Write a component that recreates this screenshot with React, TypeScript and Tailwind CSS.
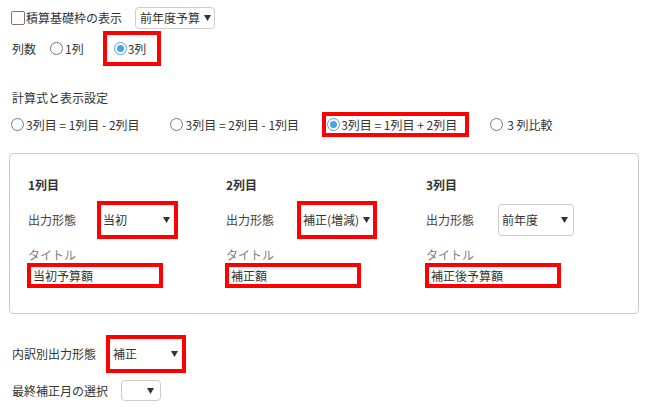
import React from "react";

const font = { fontFamily: '"Noto Sans CJK JP", "Noto Sans", sans-serif' };

function Arrow() {
  return (
    <svg width="7" height="6" viewBox="0 0 7 6" className="shrink-0">
      <polygon points="0,0 7,0 3.5,6" fill="#333" />
    </svg>
  );
}

function Radio({ checked = false }: { checked?: boolean }) {
  return (
    <span
      className={`flex h-[13px] w-[13px] shrink-0 items-center justify-center rounded-full border bg-white ${
        checked ? "border-[#4aa3e8]" : "border-[#777]"
      }`}
    >
      {checked && <span className="h-[7px] w-[7px] rounded-full bg-[#4aa3e8]" />}
    </span>
  );
}

function Select({ value, className, red = false }: { value: string; className: string; red?: boolean }) {
  return (
    <div
      className={`flex items-center justify-between gap-[4px] bg-white ${
        red ? "border-4 border-[#f00] pl-[2px] pr-[4px]" : "rounded-[4px] border border-[#ccc] pl-[3px] pr-[5px]"
      } ${className}`}
    >
      <span className="whitespace-nowrap">{value}</span>
      <Arrow />
    </div>
  );
}

type Col = {
  title: string;
  value: string;
  label: string;
  labelW: string;
  selW: string;
  red: boolean;
  input: string;
};

const cols: Col[] = [
  { title: "1列目", value: "当初", label: "出力形態", labelW: "w-[69px]", selW: "w-[81px] h-[38px]", red: true, input: "当初予算額" },
  { title: "2列目", value: "補正(増減)", label: "出力形態", labelW: "w-[71px]", selW: "w-[80px] h-[38px]", red: true, input: "補正額" },
  { title: "3列目", value: "前年度", label: "出力形態", labelW: "w-[72px]", selW: "w-[76px] h-[32px]", red: false, input: "補正後予算額" },
];

function Column({ col }: { col: Col }) {
  return (
    <div className="flex flex-col">
      <div className="h-[16px] font-bold leading-[16px]">{col.title}</div>
      <div className="mt-[8px] flex h-[38px] items-center">
        <span className={`${col.labelW} shrink-0 text-[#444]`}>{col.label}</span>
        <Select value={col.value} red={col.red} className={col.selW} />
      </div>
      <div className="mt-[8px] h-[16px] leading-[16px] text-[#808080]">タイトル</div>
      <div className="-ml-[1px] flex h-[25px] w-[136px] items-center border-4 border-[#f00] bg-white pl-[2px] leading-[16px]">
        {col.input}
      </div>
    </div>
  );
}

export default function App() {
  return (
    <div className="h-[410px] w-[658px] overflow-hidden bg-white text-[12px] leading-[16px] text-[#333]" style={font}>
      <div className="mt-[7px] flex h-[22px] items-center">
        <span className="ml-[11px] h-[14px] w-[14px] rounded-[2px] border border-[#777] bg-white" />
        <span className="ml-[1px]">積算基礎枠の表示</span>
        <Select value="前年度予算" className="ml-[13px] h-[22px] w-[80px] rounded-[3px] pl-[4px]" />
      </div>

      <div className="mt-[2px] flex h-[35px] items-center">
        <span className="ml-[12px]">列数</span>
        <span className="ml-[14px]">
          <Radio />
        </span>
        <span className="ml-[2px]">1列</span>
        <div className="ml-[19px] flex h-[35px] w-[58px] items-center border-4 border-[#f00] pl-[7px]">
          <Radio checked />
          <span className="ml-[1px]">3列</span>
        </div>
      </div>

      <div className="ml-[12px] mt-[24px] h-[16px]">計算式と表示設定</div>

      <div className="mt-[6px] flex h-[25px] items-center">
        <span className="ml-[11px]">
          <Radio />
        </span>
        <span className="ml-[2px]">3列目 = 1列目 - 2列目</span>
        <span className="ml-[30px]">
          <Radio />
        </span>
        <span className="ml-[3px]">3列目 = 2列目 - 1列目</span>
        <div className="ml-[23px] flex h-[25px] w-[147px] items-center border-4 border-[#f00] pl-[1px]">
          <Radio checked />
          <span className="ml-[1px]">3列目 = 1列目 + 2列目</span>
        </div>
        <span className="ml-[21px]">
          <Radio />
        </span>
        <span className="ml-[4px]">3 列比較</span>
      </div>

      <div className="ml-[9px] mt-[16px] grid h-[161px] w-[630px] grid-cols-[198px_200px_1fr] rounded-[4px] border border-[#ccc] pl-[18px] pt-[23px]">
        {cols.map((c) => (
          <Column key={c.title} col={c} />
        ))}
      </div>

      <div className="mt-[21px] flex h-[38px] items-center">
        <span className="ml-[12px]">内訳別出力形態</span>
        <Select value="補正" red className="ml-[10px] h-[38px] w-[80px] pl-[3px]" />
      </div>

      <div className="mt-[7px] flex h-[21px] items-center">
        <span className="ml-[12px]">最終補正月の選択</span>
        <Select value="" className="ml-[13px] h-[21px] w-[40px] pr-[6px]" />
      </div>
    </div>
  );
}
